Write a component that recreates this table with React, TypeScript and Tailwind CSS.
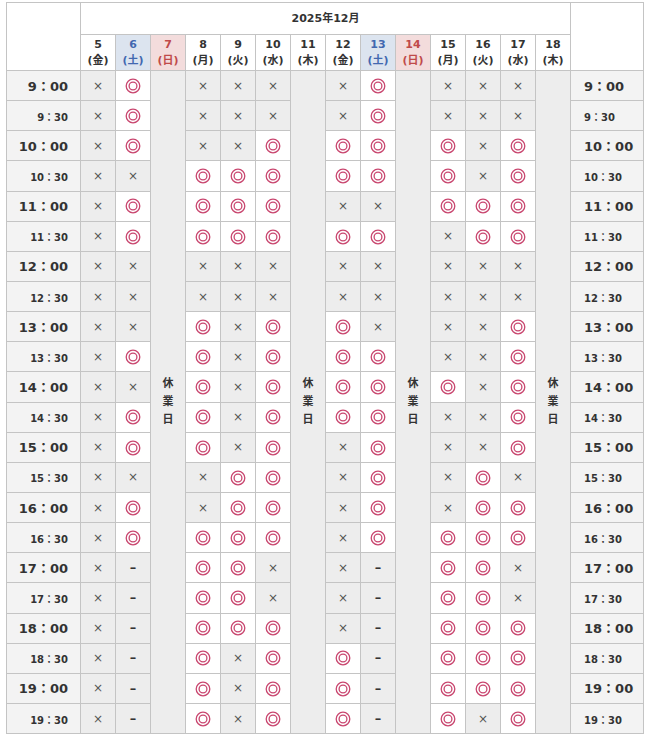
import React from "react";

type V = "o" | "x" | "-";

const days: { d: string; w: string; closed?: boolean; kind?: "sat" | "sun" }[] = [
  { d: "5", w: "金" },
  { d: "6", w: "土", kind: "sat" },
  { d: "7", w: "日", kind: "sun", closed: true },
  { d: "8", w: "月" },
  { d: "9", w: "火" },
  { d: "10", w: "水" },
  { d: "11", w: "木", closed: true },
  { d: "12", w: "金" },
  { d: "13", w: "土", kind: "sat" },
  { d: "14", w: "日", kind: "sun", closed: true },
  { d: "15", w: "月" },
  { d: "16", w: "火" },
  { d: "17", w: "水" },
  { d: "18", w: "木", closed: true },
];

const rows: [string, boolean, string][] = [
  ["9：00", true, "xoxxxxoxxx"],
  ["9：30", false, "xoxxxxoxxx"],
  ["10：00", true, "xoxxooooxo"],
  ["10：30", false, "xxooooooxo"],
  ["11：00", true, "xooooxxooo"],
  ["11：30", false, "xooooooxoo"],
  ["12：00", true, "xxxxxxxxxx"],
  ["12：30", false, "xxxxxxxxxx"],
  ["13：00", true, "xxoxooxxxo"],
  ["13：30", false, "xooxoooxxo"],
  ["14：00", true, "xxoxooooxo"],
  ["14：30", false, "xooxoooxxo"],
  ["15：00", true, "xooxoxoxxo"],
  ["15：30", false, "xxxooxoxox"],
  ["16：00", true, "xoxooxoxoo"],
  ["16：30", false, "xooooxoooo"],
  ["17：00", true, "x-ooxx-oox"],
  ["17：30", false, "x-ooxx-oox"],
  ["18：00", true, "x-ooox-ooo"],
  ["18：30", false, "x-oxoo-ooo"],
  ["19：00", true, "x-oxoo-ooo"],
  ["19：30", false, "x-oxoo-oxo"],
];

const Double = () => (
  <svg width="16" height="16" viewBox="0 0 16 16" className="inline-block align-middle">
    <circle cx="8" cy="8" r="6.8" fill="none" stroke="#c9466f" strokeWidth="1.3" />
    <circle cx="8" cy="8" r="3.9" fill="none" stroke="#c9466f" strokeWidth="1.3" />
  </svg>
);

const border = "border border-[#c4c4c4]";

export default function App() {
  return (
    <div
      className="bg-white w-[646px] h-[736px] pt-[2px] pl-[6px]"
      style={{ fontFamily: '"DejaVu Sans", "Noto Sans CJK JP", sans-serif' }}
    >
      <table className="table-fixed border-collapse w-[637px] text-[#333]">
        <colgroup>
          <col style={{ width: 74 }} />
          {days.map((d) => (
            <col key={d.d} style={{ width: 35 }} />
          ))}
          <col style={{ width: 73 }} />
        </colgroup>
        <thead>
          <tr className="h-[32px]">
            <th rowSpan={2} className={`${border} bg-white`}></th>
            <th colSpan={14} className={`${border} bg-white text-[11px] font-bold text-center pt-[2px]`}>
              2025年12月
            </th>
            <th rowSpan={2} className={`${border} bg-white`}></th>
          </tr>
          <tr className="h-[36px]">
            {days.map((d) => {
              const cls =
                d.kind === "sat"
                  ? "bg-[#dce4ef] text-[#4268b0]"
                  : d.kind === "sun"
                  ? "bg-[#f3dcdc] text-[#c04a4a]"
                  : "bg-white text-[#333]";
              return (
                <th key={d.d} className={`${border} ${cls} text-[11px] font-bold leading-[16px] text-center p-0`}>
                  <div>{d.d}</div>
                  <div>({d.w})</div>
                </th>
              );
            })}
          </tr>
        </thead>
        <tbody>
          {rows.map(([t, big, vals], ri) => {
            const label = (
              <span className={big ? "text-[13px] font-bold" : "text-[10px] font-bold"}>{t}</span>
            );
            let vi = 0;
            return (
              <tr key={t} className="h-[30.15px]">
                <td className={`${border} bg-[#f3f3f3] text-right pr-[12px] p-0`}>{label}</td>
                {days.map((d) => {
                  if (d.closed) {
                    if (ri !== 0) return null;
                    return (
                      <td
                        key={d.d}
                        rowSpan={22}
                        className={`${border} bg-[#ededed] text-center align-middle p-0 text-[11px] font-bold leading-[18px] text-[#333]`}
                      >
                        <div>休</div>
                        <div>業</div>
                        <div>日</div>
                      </td>
                    );
                  }
                  const v = vals[vi++] as V;
                  if (v === "o")
                    return (
                      <td key={d.d} className={`${border} bg-white text-center p-0 leading-none`}>
                        <Double />
                      </td>
                    );
                  if (v === "x")
                    return (
                      <td key={d.d} className={`${border} bg-[#ededed] text-center p-0 text-[12px] text-[#555]`}>
                        ×
                      </td>
                    );
                  return (
                    <td key={d.d} className={`${border} bg-[#ededed] text-center p-0 text-[13px] font-bold text-[#333]`}>
                      –
                    </td>
                  );
                })}
                <td className={`${border} bg-[#f3f3f3] text-left pl-[13px] p-0`}>{label}</td>
              </tr>
            );
          })}
        </tbody>
      </table>
    </div>
  );
}
